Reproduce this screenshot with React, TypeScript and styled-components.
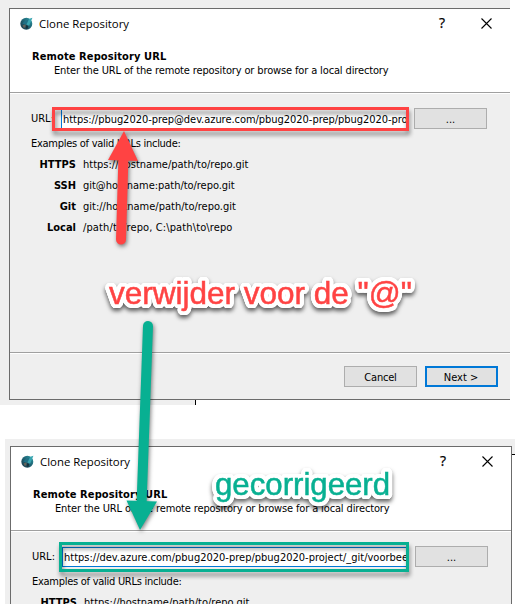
import React from "react";
import styled, { createGlobalStyle } from "styled-components";

const GlobalStyle = createGlobalStyle`
  * { box-sizing: border-box; }
  body { margin: 0; background: #fff; overflow: hidden; }
`;

const Page = styled.main`
  position: relative;
  width: 515px;
  height: 604px;
  overflow: hidden;
  background: #fff;
  color: #000;
  font: 11px/14px "DejaVu Sans Condensed", "DejaVu Sans", sans-serif;
  font-stretch: condensed;
`;

const FirstShot = styled.section`
  width: 510px;
  height: 400px;
  padding: 8px 0 0 9px;
  background: #efefef;
`;

const ShotEdge = styled.div`
  width: 196px;
  height: 5px;
  margin-bottom: 34px;
  background: #efefef;
  border-right: 1px solid #000;
`;

const SecondShot = styled.section`
  display: flex;
  height: 165px;
  margin-left: 5px;
  padding: 7px 0 0 5px;
  overflow: hidden;
  background: #efefef;
`;

const SideStrip = styled.div`
  width: 3px;
  height: 151px;
  margin-top: 8px;
  border-top: 1px solid #000;
  background: #fff;
`;

const Window = styled.article<{ $closed?: boolean }>`
  width: ${(p) => (p.$closed ? 502 : 501)}px;
  flex-shrink: 0;
  height: 392px;
  display: flex;
  flex-direction: column;
  border: 1px solid #6b6b6b;
  border-right-width: ${(p) => (p.$closed ? 1 : 0)}px;
  background: #efefef;
`;

const Header = styled.header`
  height: 85px;
  flex-shrink: 0;
  background: #fff;
  border-bottom: 1px solid #fff;
  box-shadow: inset 0 -1px #a0a0a0;
`;

const TitleBar = styled.div`
  display: flex;
  align-items: center;
  height: 28px;
  padding: 0 16px 0 10px;
`;

const Title = styled.span`
  flex: 1;
  margin-left: 6px;
  font: 11.4px/16px "Open Sans", sans-serif;
  white-space: pre;
  padding-top: 2px;
`;

const HelpMark = styled.span`
  width: 42px;
  font: 14px/16px "Open Sans", sans-serif;
  -webkit-text-stroke: 0.25px #000;
`;

const CloseIcon = styled.svg`
  display: block;
  width: 11px;
  height: 11px;
  margin: 0 2px 0 0;
`;

const Text = styled.span<{ $track?: number }>`
  white-space: pre;
  letter-spacing: ${(p) => p.$track ?? 0}px;
`;

const Heading = styled.h1`
  margin: 13px 0 0 22px;
  font: bold 11px/14px "DejaVu Sans Condensed", "DejaVu Sans", sans-serif;
  letter-spacing: 0.11px;
`;

const Description = styled.p`
  margin: 0 0 0 44px;
  letter-spacing: -0.137px;
  white-space: pre;
`;

const Body = styled.div`
  height: 260px;
  flex-shrink: 0;
  padding: 14px 22px 0 21px;
  border-bottom: 1px solid #fff;
  box-shadow: inset 0 -1px #a0a0a0;
`;

const UrlRow = styled.div`
  display: flex;
  align-items: center;
  height: 21px;
`;

const UrlLabel = styled.label`
  width: 30px;
  flex-shrink: 0;
  padding-top: 1px;
`;

const UrlField = styled.div`
  width: 347px;
  height: 20px;
  flex-shrink: 0;
  margin-right: 6px;
  padding: 3px 0 0 1px;
  overflow: hidden;
  line-height: 13px;
  background: #fff;
  border: 1px solid #0078d7;
`;

const Button = styled.button<{ $primary?: boolean }>`
  width: 73px;
  height: 21px;
  flex-shrink: 0;
  padding: ${(p) => (p.$primary ? "1px 1px 0 0" : "1px 0 0 0")};
  font: inherit;
  line-height: 17px;
  color: #000;
  background: #e1e1e1;
  border: ${(p) => (p.$primary ? "2px solid #0078d7" : "1px solid #adadad")};
`;

const Caption = styled.p`
  margin: 8px 0 7px;
  letter-spacing: -0.27px;
`;

const Examples = styled.dl`
  display: grid;
  grid-template-columns: 45px 1fr;
  column-gap: 7px;
  row-gap: 7px;
  margin: 0;
`;

const Kind = styled.dt`
  text-align: right;
  font-weight: bold;
`;

const Sample = styled.dd`
  margin: 0;
`;

const Footer = styled.footer`
  display: flex;
  justify-content: flex-end;
  gap: 8px;
  padding: 12px 12px 0 0;
`;

const Marker = styled.div<{ $x: number; $y: number; $w: number; $h: number; $color: string }>`
  position: absolute;
  left: ${(p) => p.$x}px;
  top: ${(p) => p.$y}px;
  width: ${(p) => p.$w}px;
  height: ${(p) => p.$h}px;
  border: 3px solid ${(p) => p.$color};
  filter: drop-shadow(1px 4px 2px rgba(0, 0, 0, 0.45));
`;

const Arrows = styled.svg`
  position: absolute;
  inset: 0;
  width: 515px;
  height: 604px;
  filter: drop-shadow(1px 2px 2px rgba(0, 0, 0, 0.5));
`;

/* White halo: shadows laid on two rings round each glyph. */
const halo = [2.2, 4.2]
  .flatMap((r) =>
    Array.from({ length: 24 }, (_, i) => {
      const a = (i * Math.PI) / 12;
      return `${(r * Math.cos(a)).toFixed(2)}px ${(r * Math.sin(a)).toFixed(2)}px 0 #fff`;
    })
  )
  .join(", ");

const Note = styled.div<{ $x: number; $y: number; $size: number; $color: string }>`
  position: absolute;
  left: ${(p) => p.$x}px;
  top: ${(p) => p.$y}px;
  font: ${(p) => p.$size}px/36px "Liberation Sans", Arial, sans-serif;
  white-space: pre;
  color: ${(p) => p.$color};
  -webkit-text-stroke: 0.5px ${(p) => p.$color};
  text-shadow: ${halo};
  filter: drop-shadow(0 3px 2px rgba(0, 0, 0, 0.6));
`;

const RED = "#ff4343";
const GREEN = "#08b092";

function AppIcon() {
  return (
    <svg width="13" height="13" viewBox="0 0 13 13">
      <defs>
        <linearGradient id="orb" x1="1" y1="0" x2="0" y2="1">
          <stop offset="0" stopColor="#2d9aa4" />
          <stop offset="0.5" stopColor="#1f6273" />
          <stop offset="1" stopColor="#1b3545" />
        </linearGradient>
      </defs>
      <circle cx="6.3" cy="6.7" r="6" fill="url(#orb)" />
      <path d="M12.4 .8 9.2 8.8 6.500 7.500 3.500 6 7 2.5Z" fill="#38a5b0" />
      <path d="M6.5 7.5 2.2 6.7 7 2.5 9 2Z" fill="#1f7085" />
      <path d="M2.6 8.4 5.5 7.2 5.3 10.6 3.6 10.8Z" fill="#65625a" />
      <path d="M6.2 8 8.2 9.3 7.4 12 5.6 11.6Z" fill="#16303c" />
    </svg>
  );
}

const examples = [
  { kind: "HTTPS", sample: "https://hostname/path/to/repo.git", track: 0 },
  { kind: "SSH", sample: "git@hostname:path/to/repo.git", track: -0.04 },
  { kind: "Git", sample: "git://hostname/path/to/repo.git", track: 0 },
  { kind: "Local", sample: "/path/to/repo, C:\\path\\to\\repo", track: 0.12 },
];

function CloneWindow({ url, track, closed }: { url: string; track: number; closed?: boolean }) {
  return (
    <Window $closed={closed}>
      <Header>
        <TitleBar>
          <AppIcon />
          <Title>Clone Repository</Title>
          <HelpMark>?</HelpMark>
          <CloseIcon viewBox="0 0 11 11">
            <path d="M.5.5l10 10M10.500.5l-10 10" stroke="#000" strokeWidth="1.1" />
          </CloseIcon>
        </TitleBar>
        <Heading>Remote Repository URL</Heading>
        <Description>Enter the URL of the remote repository or browse for a local directory</Description>
      </Header>
      <Body>
        <UrlRow>
          <UrlLabel>URL:</UrlLabel>
          <UrlField>
            <Text $track={track}>{url}</Text>
          </UrlField>
          <Button>...</Button>
        </UrlRow>
        <Caption>Examples of valid URLs include:</Caption>
        <Examples>
          {examples.map((e) => (
            <React.Fragment key={e.kind}>
              <Kind>{e.kind}</Kind>
              <Sample>
                <Text $track={e.track}>{e.sample}</Text>
              </Sample>
            </React.Fragment>
          ))}
        </Examples>
      </Body>
      <Footer>
        <Button>
          <Text $track={-0.2}>Cancel</Text>
        </Button>
        <Button $primary>Next &gt;</Button>
      </Footer>
    </Window>
  );
}

export default function App() {
  return (
    <Page>
      <GlobalStyle />
      <FirstShot>
        <CloneWindow url="https://pbug2020-prep@dev.azure.com/pbug2020-prep/pbug2020-pro" track={-0.04} />
      </FirstShot>
      <ShotEdge />
      <SecondShot>
        <CloneWindow url="https://dev.azure.com/pbug2020-prep/pbug2020-project/_git/voorbee" track={0} closed />
        <SideStrip />
      </SecondShot>
      <Marker $x={52} $y={107} $w={357} $h={24} $color={RED} />
      <Marker $x={59} $y={542} $w={350} $h={30} $color={GREEN} />
      <Note $x={109} $y={275} $size={31.5} $color={RED}>
        verwijder voor de "@"
      </Note>
      <Note $x={215} $y={467} $size={31.2} $color={GREEN}>
        gecorrigeerd
      </Note>
      <Arrows viewBox="0 0 515 604">
        <path d="M123.500 155 121 239.500" stroke={RED} strokeWidth="10" strokeLinecap="round" />
        <path d="M124 131 138 161 108 160Z" fill={RED} />
        <path d="M148 326 141.500 505" stroke={GREEN} strokeWidth="10" strokeLinecap="round" />
        <path d="M140 530 126.500 500.500 157 501.500Z" fill={GREEN} />
      </Arrows>
    </Page>
  );
}
